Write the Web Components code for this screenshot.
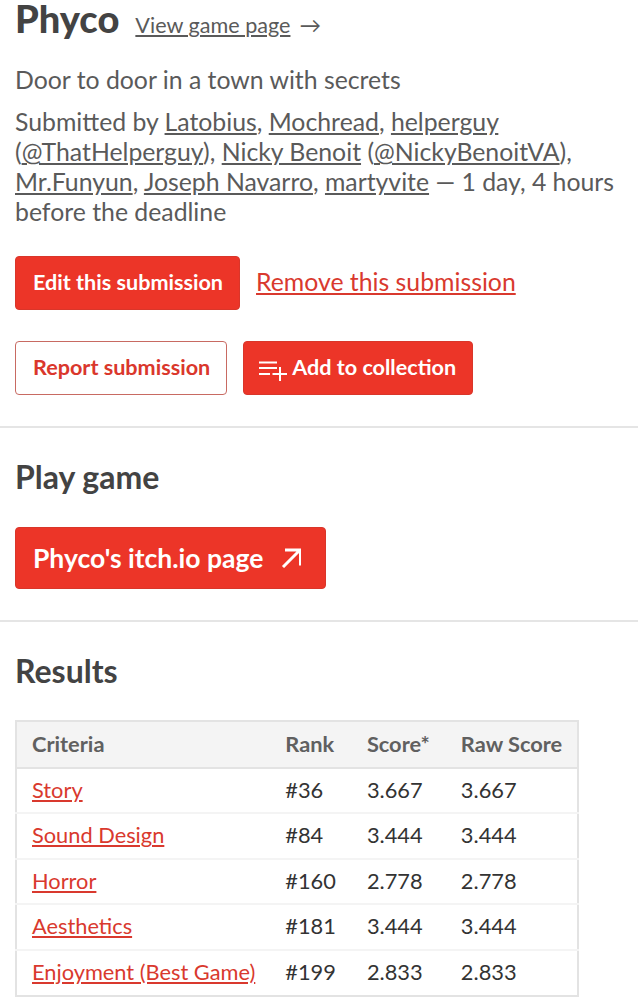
<!DOCTYPE html>
<html><head><meta charset="utf-8"><title>Phyco</title>
<style>
html,body{margin:0;padding:0;background:#fff}
body{font-family:Lato,"Noto Sans",sans-serif;color:#5a5a5a;font-size:24.8px;line-height:30px;overflow:hidden;height:1000px}
a{color:inherit}
</style></head><body>
<template id="t-btn"><style>
:host{display:inline-flex;box-sizing:border-box;align-items:center;gap:5px;height:var(--h,54px);padding:0 16px 0 17px;background:#ec3528;color:#fff;border:1px solid #d9362a;border-radius:4px;font:700 var(--fs,21.6px)/1 Lato,sans-serif;white-space:nowrap}
:host([outline]){background:#fff;color:#da372c;border-color:#c86a62}
::slotted(svg){display:block;flex:none}
</style><slot name="icon"></slot><slot></slot><slot name="after"></slot></template>

<template id="t-section"><style>
:host{display:block;border-top:2px solid #e5e5e5;padding:30px 15px 31px}
h2{margin:0 0 var(--gap,31px);font:700 32px/38px Lato,sans-serif;color:#434343}
</style><h2><slot name="title"></slot></h2><slot></slot></template>

<template id="t-header"><style>
:host{display:block;padding:0 15px}
.top{display:flex;align-items:baseline;gap:16px;height:36px;margin-bottom:29px}
h1{margin:0;font:900 38px/36px Lato,sans-serif;color:#434343}
.view{font-size:21.6px}
</style><div class="top"><h1><slot name="title"></slot></h1><span class="view"><slot name="view"></slot></span></div><slot></slot></template>

<template id="t-actions"><style>
:host{display:flex;align-items:center;gap:16px;padding:0 15px}
</style><slot></slot></template>

<template id="t-results"><style>
:host{display:block}
table{border-collapse:collapse;border:2px solid #e3e3e3;font-size:21.8px;line-height:28.6px;color:#333}
th{background:#f4f4f4;font-weight:700;text-align:left;color:#606060;padding:8px 15px 8px 15px;border-bottom:2px solid #e3e3e3;white-space:nowrap}
td{padding:7px 15px 8px 15px;border-bottom:2px solid #f4f4f4;white-space:nowrap}
th:nth-child(3),td:nth-child(3){padding-left:16px}
th:nth-child(4),td:nth-child(4){padding-left:16px}
tr:last-child td{border-bottom:0}
a{color:#d9392e}
</style><table><thead><tr><th>Criteria</th><th>Rank</th><th>Score*</th><th>Raw Score</th></tr></thead>
<tbody>
<tr><td><a href="#">Story</a></td><td>#36</td><td>3.667</td><td>3.667</td></tr>
<tr><td><a href="#">Sound Design</a></td><td>#84</td><td>3.444</td><td>3.444</td></tr>
<tr><td><a href="#">Horror</a></td><td>#160</td><td>2.778</td><td>2.778</td></tr>
<tr><td><a href="#">Aesthetics</a></td><td>#181</td><td>3.444</td><td>3.444</td></tr>
<tr><td><a href="#">Enjoyment (Best Game)</a></td><td>#199</td><td>2.833</td><td>2.833</td></tr>
</tbody></table></template>

<game-header>
  <span slot="title">Phyco</span>
  <span slot="view"><a href="#">View game page</a><span style="margin-left:9px">→</span></span>
  <p style="margin:0 0 12px">Door to door in a town with secrets</p>
  <p style="margin:0 0 29px">Submitted by <a href="#">Latobius</a>, <a href="#">Mochread</a>, <a href="#">helperguy</a> (<a href="#">@ThatHelperguy</a>), <a href="#">Nicky Benoit</a> (<a href="#">@NickyBenoitVA</a>), <a href="#">Mr.Funyun</a>, <a href="#">Joseph Navarro</a>, <a href="#">martyvite</a> — 1 day, 4 hours before the deadline</p>
</game-header>
<action-row>
  <red-button>Edit this submission</red-button>
  <a href="#" style="color:#d9392e;font-size:24.8px;padding-bottom:2px">Remove this submission</a>
</action-row>
<div style="height:31px"></div>
<action-row>
  <red-button outline>Report submission</red-button>
  <red-button><svg slot="icon" style="margin-left:-2px" width="28" height="26" viewBox="0 0 28 26" fill="none" stroke="#fff" stroke-width="2"><path d="M0 7.500h18M0 13h18M0 19h11M21 12v14M13.500 19h14.500"/></svg>Add to collection</red-button>
</action-row>
<div style="height:31px"></div>
<page-section>
  <span slot="title">Play game</span>
  <red-button style="--h:62px;--fs:26.5px;gap:18px;padding:0 24px 0 17px">Phyco's itch.io page<svg slot="after" width="20" height="20" viewBox="0 0 20 20" fill="none" stroke="#fff" stroke-width="3"><path d="M2 19L19 2M4 2h15.500v15.500"/></svg></red-button>
</page-section>
<page-section style="--gap:30px">
  <span slot="title">Results</span>
  <results-table></results-table>
</page-section>
<script>
function def(tag,id){customElements.define(tag,class extends HTMLElement{constructor(){super();this.attachShadow({mode:'open'}).appendChild(document.getElementById(id).content.cloneNode(true));}});}
def('red-button','t-btn');def('page-section','t-section');def('game-header','t-header');def('action-row','t-actions');def('results-table','t-results');
</script>
</body></html>
